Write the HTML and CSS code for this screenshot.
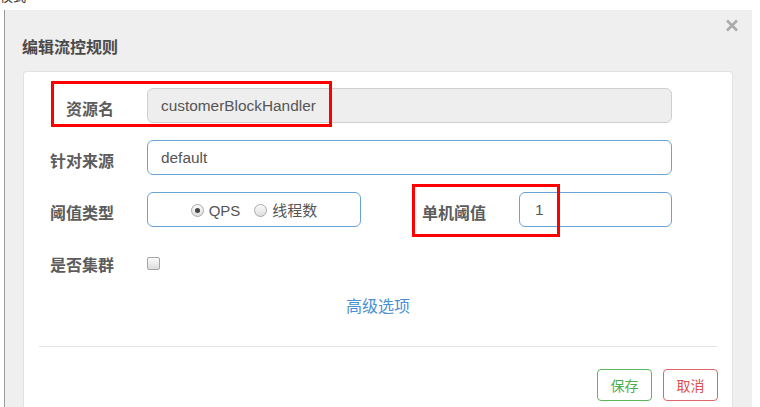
FILE: index.html
```html
<!DOCTYPE html>
<html lang="zh-CN">
<head>
<meta charset="utf-8">
<title>编辑流控规则</title>
<link rel="stylesheet" href="styles.css">
</head>
<body>
<div class="top-strip"><span class="top-text">模式</span></div>
<div class="modal">
  <div class="modal-header">
    <div class="modal-title">编辑流控规则</div>
    <svg class="close" width="14" height="13" viewBox="0 0 14 13"><path d="M2 1.5 L12 11.5 M12 1.5 L2 11.5" stroke="#ababab" stroke-width="2.6" stroke-linecap="butt"/></svg>
  </div>
  <div class="panel">
    <div class="row">
      <label class="label">资源名</label>
      <div class="input input-disabled">customerBlockHandler</div>
    </div>
    <div class="row">
      <label class="label">针对来源</label>
      <div class="input input-focus">default</div>
    </div>
    <div class="row">
      <label class="label">阈值类型</label>
      <div class="input input-focus radio-box">
        <span class="radio radio-checked"></span><span class="radio-text">QPS</span>
        <span class="radio"></span><span class="radio-text">线程数</span>
      </div>
      <label class="label label-right">单机阈值</label>
      <div class="input input-focus input-small">1</div>
    </div>
    <div class="row row-check">
      <label class="label">是否集群</label>
      <span class="checkbox"></span>
    </div>
    <div class="advanced">高级选项</div>
    <div class="divider"></div>
    <div class="footer">
      <button class="btn btn-save">保存</button>
      <button class="btn btn-cancel">取消</button>
    </div>
  </div>
</div>
<div class="mark mark-1"></div>
<div class="mark mark-2"></div>
</body>
</html>
```
FILE: styles.css
```css
html, body {
  margin: 0;
  padding: 0;
  background: #ffffff;
  overflow: hidden;
  width: 760px;
  height: 407px;
}
body {
  font-family: "Liberation Sans", "Noto Sans CJK SC", sans-serif;
  position: relative;
}
.top-strip {
  height: 10px;
  overflow: hidden;
}
.top-text {
  display: block;
  font-size: 13px;
  line-height: 14px;
  margin-top: -11px;
  color: #333;
  font-family: "Noto Sans CJK SC", sans-serif;
}
.modal {
  margin-left: 4px;
  width: 748px;
  height: 397px;
  box-sizing: border-box;
  border-left: 1px solid #9a9a9a;
  background: #efefef;
  overflow: hidden;
}
.modal-header {
  height: 61px;
  display: flex;
  justify-content: space-between;
  align-items: flex-start;
  padding: 0 13px 0 17px;
}
.modal-title {
  margin-top: 26px;
  font-family: "Noto Sans CJK SC", sans-serif;
  font-size: 16px;
  font-weight: 700;
  line-height: 20px;
  color: #4a4a4a;
}
.close {
  margin-top: 9px;
}
.panel {
  margin: 0 19px 0 18px;
  height: 345px;
  box-sizing: border-box;
  background: #fff;
  border: 1px solid #e2e2e2;
  border-bottom: none;
  border-radius: 4px 4px 0 0;
  padding-top: 16px;
}
.row {
  display: flex;
  align-items: flex-start;
  height: 35px;
  margin-bottom: 17px;
}
.label {
  width: 90px;
  margin-right: 33px;
  text-align: right;
  font-family: "Noto Sans CJK SC", sans-serif;
  font-size: 16px;
  font-weight: 700;
  line-height: 35px;
  padding-top: 3px;
  color: #5c5c5c;
  flex: none;
}
.label-right {
  margin-left: 35px;
}
.input {
  width: 525px;
  height: 35px;
  box-sizing: border-box;
  border: 1px solid #ccc;
  border-radius: 6px;
  padding: 0 13px;
  font-size: 15.4px;
  line-height: 33px;
  color: #555;
  flex: none;
}
.input-disabled {
  background: #eeeeee;
  border-color: #cfcfcf;
}
.input-focus {
  border-color: #6aa3da;
  background: #fff;
}
.input-small {
  width: 153px;
  padding-left: 15px;
}
.radio-box {
  width: 214px;
  display: flex;
  align-items: center;
  justify-content: center;
  padding: 0;
  padding-top: 2px;
}
.radio {
  width: 13px;
  height: 13px;
  box-sizing: border-box;
  border-radius: 50%;
  border: 1px solid #a9a9a9;
  background: linear-gradient(#fafafa, #dedede);
  position: relative;
  flex: none;
}
.radio-checked::after {
  content: "";
  position: absolute;
  left: 3px;
  top: 3px;
  width: 5px;
  height: 5px;
  border-radius: 50%;
  background: #444;
}
.radio-text {
  margin-left: 5px;
  margin-right: 14px;
  font-family: "Liberation Sans", "Noto Sans CJK SC", sans-serif;
  font-size: 15px;
  color: #555;
}
.radio-text:last-child {
  margin-right: 0;
}
.row-check {
  align-items: flex-start;
}
.checkbox {
  margin-top: 13px;
  width: 13px;
  height: 13px;
  box-sizing: border-box;
  border: 1px solid #a5a5a5;
  border-radius: 2px;
  background: linear-gradient(#fbfbfb, #dcdcdc);
  flex: none;
}
.advanced {
  text-align: center;
  font-family: "Noto Sans CJK SC", sans-serif;
  font-size: 16px;
  line-height: 18px;
  color: #4a8fd3;
}
.divider {
  margin: 32px 15px 0 15px;
  height: 1px;
  background: #e5e5e5;
}
.footer {
  display: flex;
  justify-content: flex-end;
  gap: 11px;
  padding: 22px 14px 0 0;
}
.btn {
  width: 55px;
  height: 32px;
  box-sizing: border-box;
  background: #fff;
  border-radius: 4px;
  font-family: "Noto Sans CJK SC", sans-serif;
  font-size: 14px;
  padding: 0;
}
.btn-save {
  border: 1px solid #5cb85c;
  color: #4cae4c;
}
.btn-cancel {
  border: 1px solid #e0666a;
  color: #d9534f;
}
.mark {
  position: absolute;
  border: 3px solid #ff0000;
  box-sizing: border-box;
}
.mark-1 {
  left: 51px;
  top: 81px;
  width: 281px;
  height: 46px;
}
.mark-2 {
  left: 412px;
  top: 184px;
  width: 148px;
  height: 53px;
}
```
